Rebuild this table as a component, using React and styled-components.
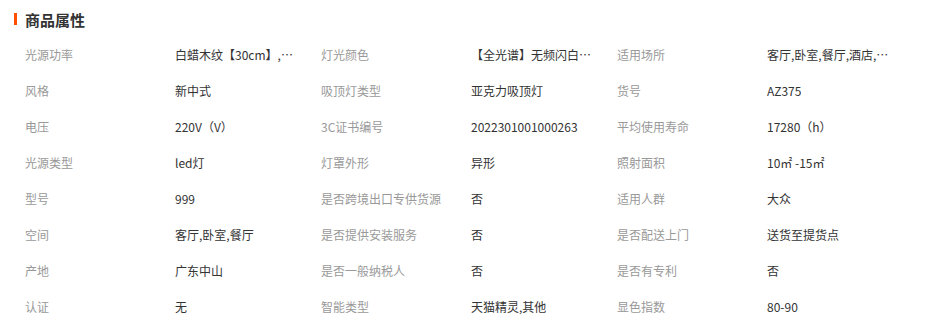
import React from 'react';
import styled, { createGlobalStyle } from 'styled-components';

const GlobalStyle = createGlobalStyle`
    body {
        margin: 0;
        background: #fff;
        font-family: "Microsoft YaHei", "Noto Sans CJK SC", "Noto Sans", sans-serif;
    }
`;

const attrs = [
    ['光源功率', '白蜡木纹【30cm】,三色变光', '灯光颜色', '【全光谱】无频闪白光护眼', '适用场所', '客厅,卧室,餐厅,酒店,书房'],
    ['风格', '新中式', '吸顶灯类型', '亚克力吸顶灯', '货号', 'AZ375'],
    ['电压', '220V（V）', '3C证书编号', '2022301001000263', '平均使用寿命', '17280（h）'],
    ['光源类型', 'led灯', '灯罩外形', '异形', '照射面积', '10㎡ -15㎡'],
    ['型号', '999', '是否跨境出口专供货源', '否', '适用人群', '大众'],
    ['空间', '客厅,卧室,餐厅', '是否提供安装服务', '否', '是否配送上门', '送货至提货点'],
    ['产地', '广东中山', '是否一般纳税人', '否', '是否有专利', '否'],
    ['认证', '无', '智能类型', '天猫精灵,其他', '显色指数', '80-90'],
];

const Panel = styled.div`
    width: 930px;
    padding-bottom: 4px;
`;

const Title = styled.h3`
    display: flex;
    align-items: center;
    height: 36px;
    margin: 0;
    padding: 2px 0 0 14px;
    box-sizing: border-box;
    font-size: 15px;
    font-weight: bold;
    color: #333;

    &::before {
        content: '';
        width: 3px;
        height: 12px;
        margin-right: 8px;
        background: #ff5000;
    }
`;

const Grid = styled.div`
    display: grid;
    grid-template-columns: repeat(3, 296px);
    grid-auto-rows: 36px;
    padding-left: 25px;
`;

const Item = styled.div`
    display: flex;
    align-items: center;
    font-size: 12px;
`;

const Label = styled.span`
    width: 150px;
    flex-shrink: 0;
    color: #999;
    white-space: nowrap;
`;

const Value = styled.span`
    max-width: 124px;
    color: #333;
    white-space: nowrap;
    overflow: hidden;
    text-overflow: ellipsis;
`;

const App = () => {
    return (
        <>
            <GlobalStyle />
            <Panel>
                <Title>商品属性</Title>
                <Grid>
                    {attrs.map((row, i) =>
                        [0, 2, 4].map((j) => (
                            <Item key={`${i}-${j}`}>
                                <Label>{row[j]}</Label>
                                <Value>{row[j + 1]}</Value>
                            </Item>
                        ))
                    )}
                </Grid>
            </Panel>
        </>
    );
};

export default App;
